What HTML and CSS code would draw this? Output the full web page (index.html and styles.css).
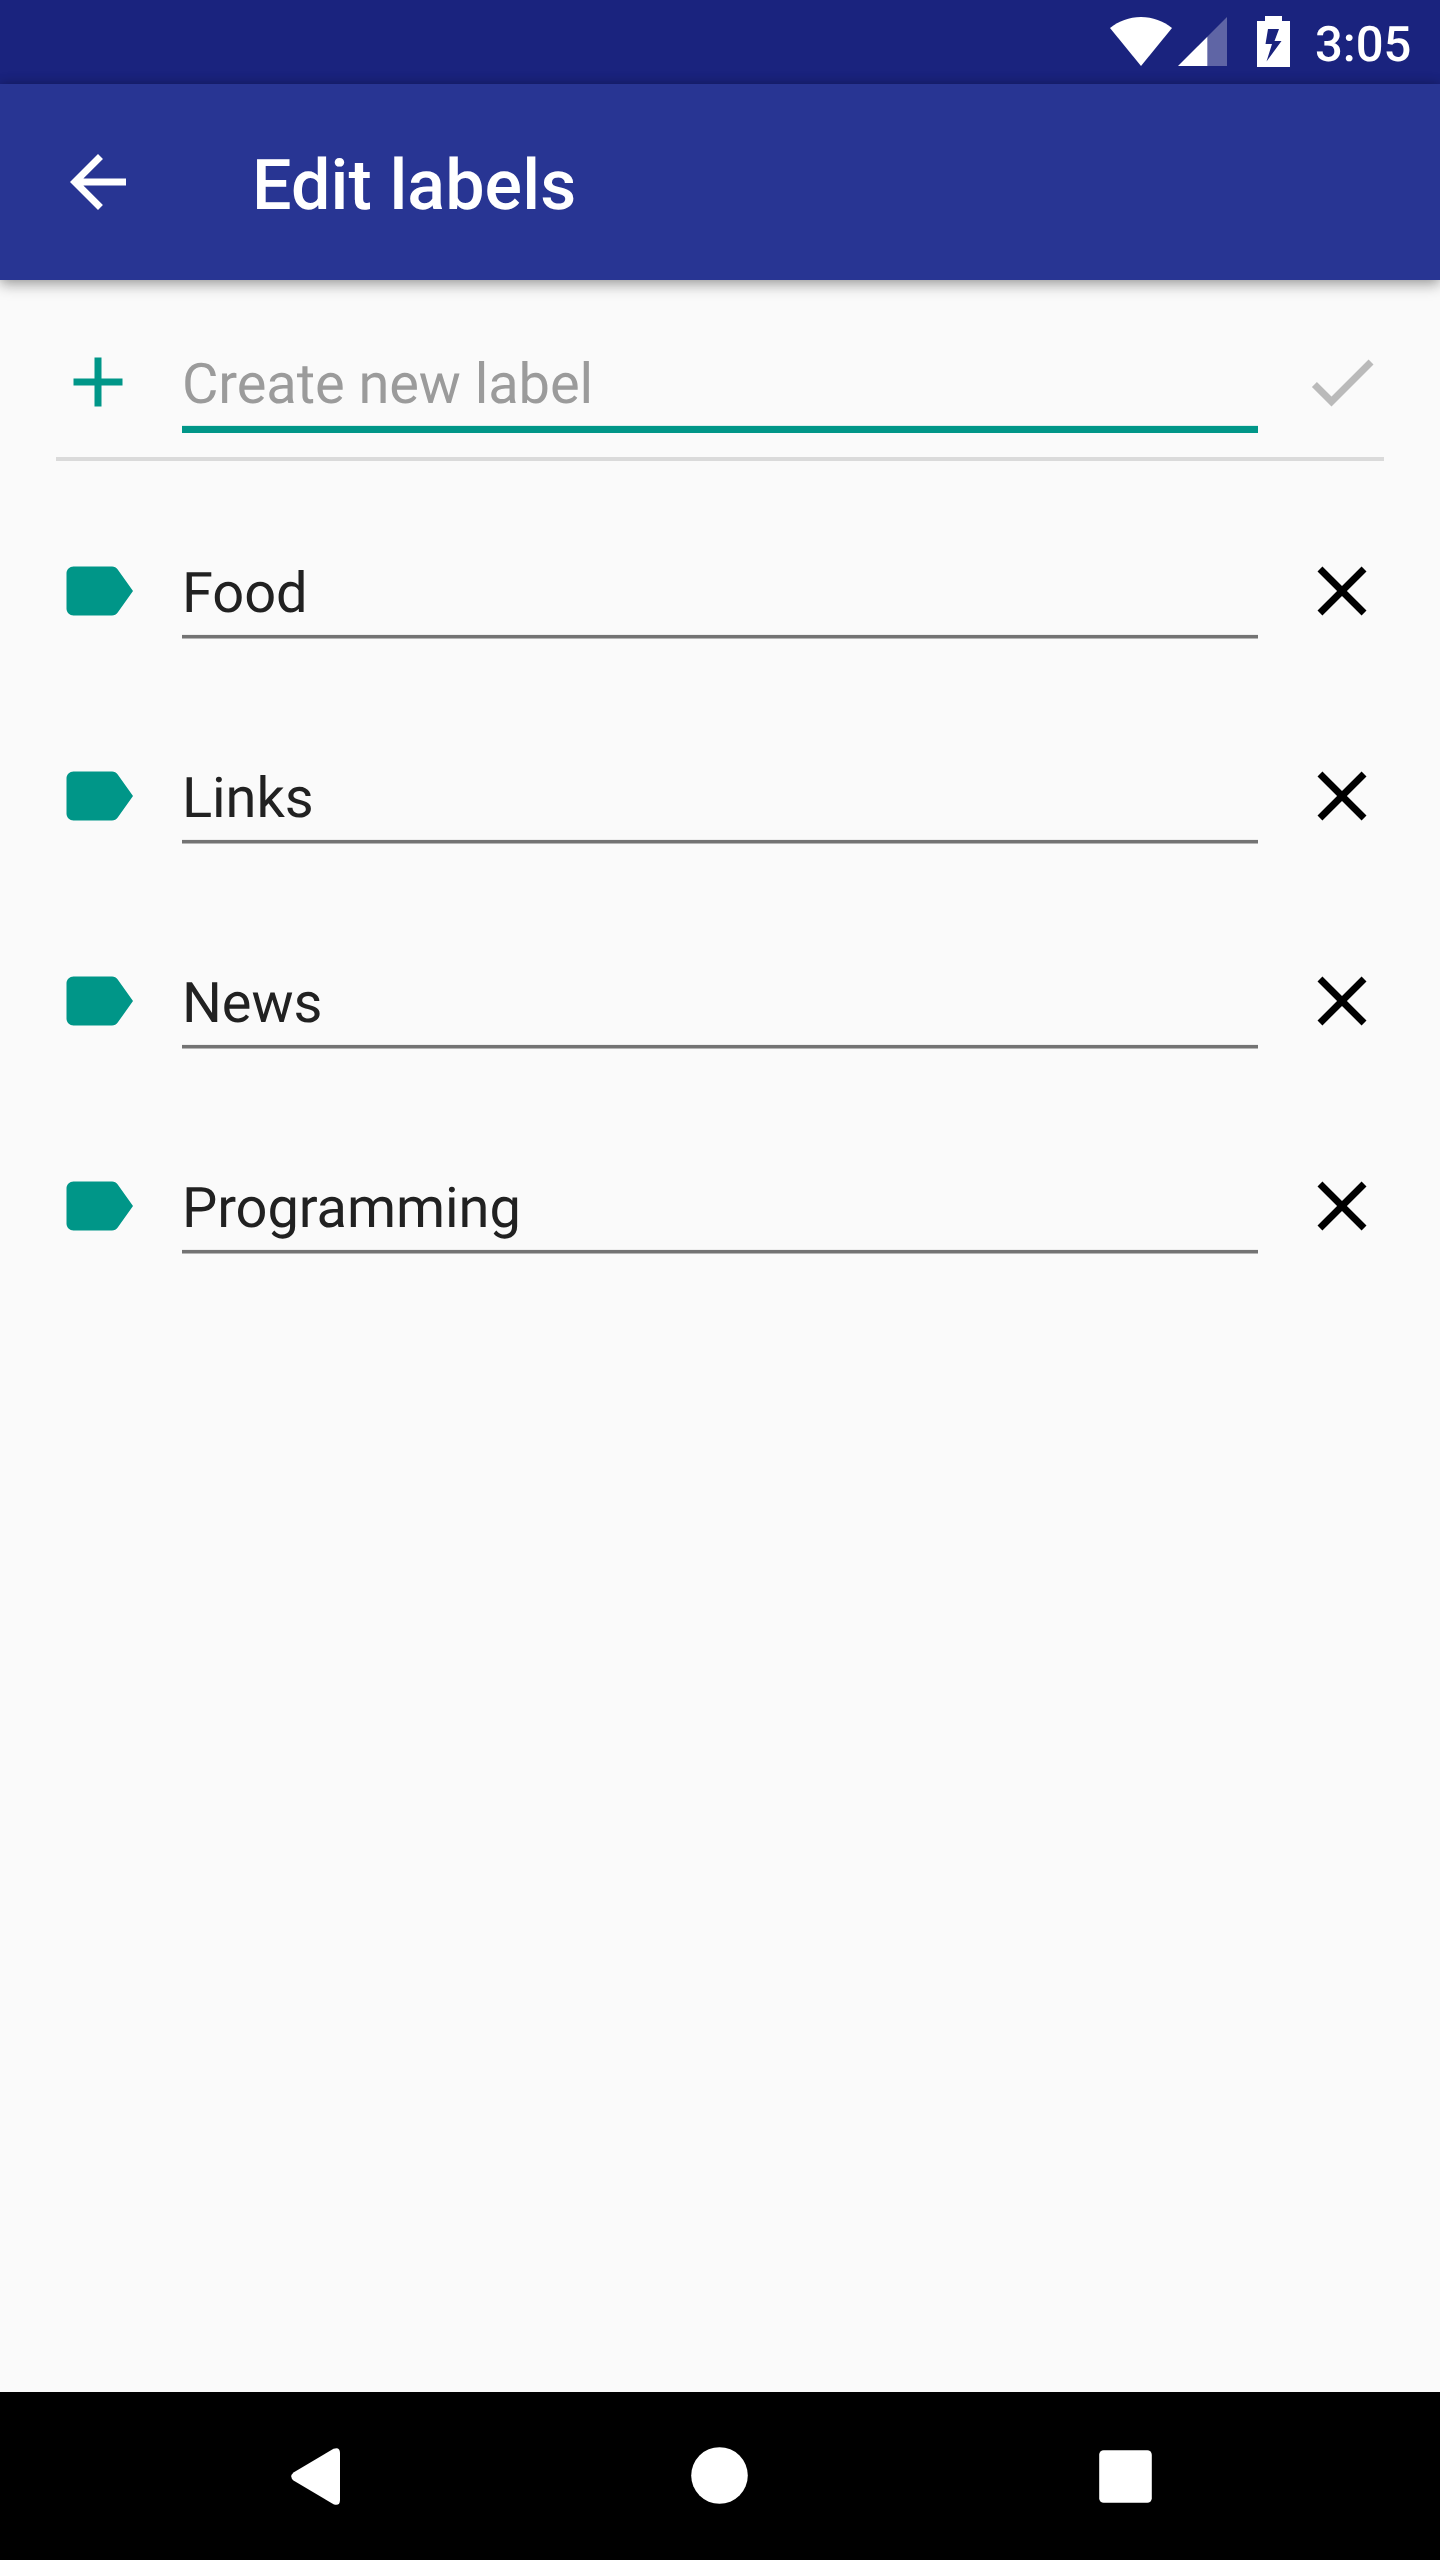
FILE: index.html
```html
<!DOCTYPE html>
<html lang="en">
<head>
<meta charset="utf-8">
<title>Edit labels</title>
<link rel="stylesheet" href="styles.css">
</head>
<body>
<svg class="defs" width="0" height="0" aria-hidden="true">
  <symbol id="label" viewBox="0 0 24 24"><path d="M17.63 5.84C17.27 5.33 16.67 5 16 5L5 5.01C3.9 5.01 3 5.9 3 7v10c0 1.1.9 1.99 2 1.99L16 19c.67 0 1.27-.33 1.63-.84L22 12l-4.37-6.16z"/></symbol>
  <symbol id="close" viewBox="0 0 24 24"><path d="M19 6.41L17.59 5 12 10.59 6.41 5 5 6.41 10.59 12 5 17.59 6.41 19 12 13.41 17.59 19 19 17.59 13.41 12z"/></symbol>
</svg>
<div class="screen">
  <div class="status">
    <svg class="wifi" width="62" height="49" viewBox="0 0 62 49"><path d="M31 49L0 11C9 4 19 0 31 0s22 4 31 11z"/></svg>
    <svg class="signal" width="49" height="49" viewBox="0 0 49 49"><path opacity=".3" d="M49 0v49H29V20z"/><path d="M0 49L29.300 19.700V49z"/></svg>
    <svg class="battery" width="33" height="51" viewBox="0 0 33 51"><path fill-rule="evenodd" d="M8 0h17v5h8v46H0V5h8zM11 13L8.500 28H15L9.500 45.500 24.500 25H17.500L22 13z"/></svg>
    <span class="clock">3:05</span>
  </div>
  <header class="toolbar">
    <svg class="icon" viewBox="0 0 24 24"><path d="M20 11H7.830l5.590-5.590L12 4l-8 8 8 8 1.410-1.410L7.830 13H20v-2z"/></svg>
    <h1 class="title">Edit labels</h1>
  </header>
  <main class="content">
    <div class="create">
      <svg class="icon teal" viewBox="0 0 24 24"><path d="M19 13h-6v6h-2v-6H5v-2h6V5h2v6h6v2z"/></svg>
      <div class="field focused">Create new label</div>
      <svg class="icon muted" viewBox="0 0 24 24"><path d="M9 16.170L4.830 12l-1.420 1.410L9 19 21 7l-1.410-1.410z"/></svg>
    </div>
    <div class="row">
      <svg class="icon teal"><use href="#label"/></svg>
      <div class="field">Food</div>
      <svg class="icon"><use href="#close"/></svg>
    </div>
    <div class="row">
      <svg class="icon teal"><use href="#label"/></svg>
      <div class="field">Links</div>
      <svg class="icon"><use href="#close"/></svg>
    </div>
    <div class="row">
      <svg class="icon teal"><use href="#label"/></svg>
      <div class="field">News</div>
      <svg class="icon"><use href="#close"/></svg>
    </div>
    <div class="row">
      <svg class="icon teal"><use href="#label"/></svg>
      <div class="field">Programming</div>
      <svg class="icon"><use href="#close"/></svg>
    </div>
  </main>
  <nav class="navbar">
    <svg class="back" width="49" height="57" viewBox="0 0 49 57"><path d="M42.500.700Q49-1.500 49 5V52Q49 58.500 42.500 56.300L2.500 32.500Q-2 28.500 2.500 24.500z"/></svg>
    <svg class="home" width="57" height="57" viewBox="0 0 57 57"><circle cx="28.500" cy="28.500" r="28.300"/></svg>
    <svg class="recents" width="53" height="53" viewBox="0 0 53 53"><rect x=".2" y=".2" width="52.600" height="52.600" rx="4.500"/></svg>
  </nav>
</div>
</body>
</html>
```
FILE: styles.css
```css
* { box-sizing: border-box; }
body {
  margin: 0;
  font-family: Roboto, "Liberation Sans", sans-serif;
  text-rendering: geometricPrecision;
  background: #fafafa;
}
svg { display: block; flex: none; }
.defs { display: none; }
.screen {
  display: flex;
  flex-direction: column;
  width: 1440px;
  height: 2560px;
  overflow: hidden;
}
.status {
  display: flex;
  align-items: flex-start;
  height: 84px;
  padding-left: 1110px;
  background: #1a237e;
  color: #fff;
  fill: #fff;
}
.wifi { margin-top: 17px; }
.signal { margin: 17px 0 0 6px; }
.battery { margin: 16px 0 0 30px; }
.clock {
  margin: 15px 0 0 25px;
  font-size: 49px;
  line-height: 60px;
  font-weight: 500;
}
.toolbar {
  position: relative;
  display: flex;
  align-items: center;
  gap: 112px;
  height: 196px;
  padding-left: 56px;
  background: #283593;
  color: #fff;
  fill: #fff;
  box-shadow: 0 5px 14px rgba(0, 0, 0, .28), 0 0 12px rgba(0, 0, 0, .2);
}
.title {
  margin: 8px 0 0;
  font-size: 70px;
  line-height: 82px;
  font-weight: 500;
  letter-spacing: .1px;
}
.content {
  flex: 1;
  padding: 0 56px;
}
.icon { width: 84px; height: 84px; }
.teal { fill: #009688; }
.muted { fill: #bababa; }
.create, .row {
  display: grid;
  grid-template-columns: 84px 1076px 84px;
  column-gap: 42px;
  align-items: start;
}
.create {
  height: 181px;
  padding-top: 60px;
  border-bottom: 4px solid #dadada;
}
.row {
  height: 205px;
  padding-top: 88px;
}
.field {
  height: 90px;
  padding-top: 11px;
  font-size: 56px;
  line-height: 66px;
  letter-spacing: -.08px;
  color: #212121;
  background: linear-gradient(#eee 1px, #737373 1px, #737373 4px, #b5b5b5 4px) left bottom / 100% 5px no-repeat;
}
.focused {
  height: 93px;
  color: #9b9b9b;
  background: linear-gradient(#dcefed 1px, #009688 1px) left bottom / 100% 8px no-repeat;
}
.navbar {
  display: flex;
  align-items: center;
  justify-content: space-between;
  height: 168px;
  padding: 0 288px 0 291px;
  background: #000;
  fill: #fff;
}
.back, .recents { margin-top: 1px; }
.home { margin-bottom: 1px; }
```
